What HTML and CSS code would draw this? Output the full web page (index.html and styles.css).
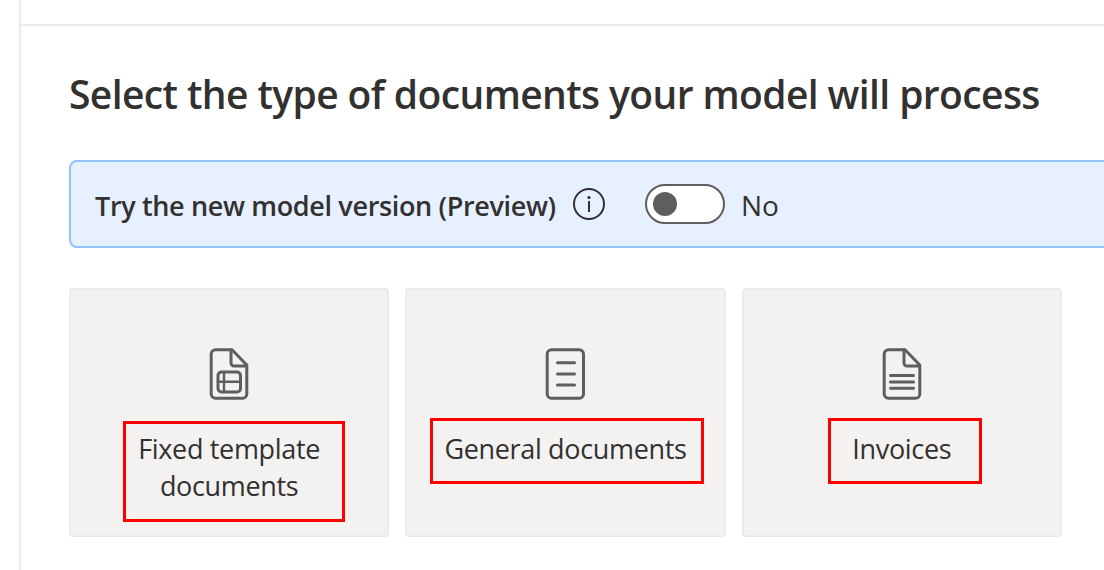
FILE: index.html
```html
<!DOCTYPE html>
<html lang="en">
<head>
<meta charset="utf-8">
<title>Select document type</title>
<link rel="stylesheet" href="styles.css">
</head>
<body>
<div class="page">
  <main class="panel">
    <div class="topbar"></div>
    <div class="content">
      <h1 class="title">Select the type of documents your model will process</h1>
      <section class="banner">
        <span class="banner-label">Try the new model version (Preview)</span>
        <svg class="info" width="32" height="32" viewBox="0 0 32 32" fill="none" stroke="#323130" stroke-width="2">
          <circle cx="16" cy="16" r="15"/>
          <path d="M16 13v11"/>
          <circle cx="16" cy="9.5" r="1.6" fill="#323130" stroke="none"/>
        </svg>
        <span class="toggle" role="switch" aria-checked="false"><span class="knob"></span></span>
        <span class="toggle-label">No</span>
      </section>
      <section class="cards">
        <article class="card">
          <svg class="icon" width="40" height="52" viewBox="-0.5 0 40 52">
            <path d="M22.500 1.700H6A4.300 4.300 0 0 0 1.700 6v40A4.300 4.300 0 0 0 6 50.200h27a4.300 4.300 0 0 0 4.300-4.300V17z"/>
            <path d="M21.500 2v13a3 3 0 0 0 3 3H37"/>
            <rect x="8.500" y="24" width="22.500" height="20" rx="3.500"/>
            <path class="thin" d="M14.500 24v20M8.500 33.800H31"/>
          </svg>
          <span class="label">Fixed template<br>documents</span>
          <span class="mark mark-fixed"></span>
        </article>
        <article class="card">
          <svg class="icon" width="40" height="52" viewBox="-0.5 0 40 52">
            <rect x="1.700" y="1.700" width="36.300" height="48.500" rx="4.300"/>
            <path d="M12 14.700h17M12 25.900h17M12 37h17"/>
          </svg>
          <span class="label">General documents</span>
          <span class="mark mark-general"></span>
        </article>
        <article class="card">
          <svg class="icon" width="40" height="52" viewBox="-0.5 0 40 52">
            <path d="M22.500 1.700H6A4.300 4.300 0 0 0 1.700 6v40A4.300 4.300 0 0 0 6 50.200h27a4.300 4.300 0 0 0 4.300-4.300V17z"/>
            <path d="M21.500 2v13a3 3 0 0 0 3 3H37"/>
            <path d="M8 27.600h23M8 34h23M8 40.300h23"/>
          </svg>
          <span class="label">Invoices</span>
          <span class="mark mark-invoices"></span>
        </article>
      </section>
    </div>
  </main>
</div>
</body>
</html>
```
FILE: styles.css
```css
* { box-sizing: border-box; }
body {
  margin: 0;
  background: #fff;
  color: #323130;
  font-family: "Open Sans", "Noto Sans", sans-serif;
  overflow: hidden;
}
.page { height: 570px; padding-left: 19px; overflow: hidden; }
.panel { height: 100%; border-left: 2px solid #ebebeb; }
.topbar { height: 26px; border-bottom: 2px solid #ebebeb; }
.content { padding: 42px 0 0 48px; }
.title {
  margin: 0;
  font-size: 39px;
  line-height: 52px;
  font-weight: 600;
  letter-spacing: -0.6px;
  white-space: nowrap;
}
.banner {
  display: flex;
  align-items: center;
  height: 88px;
  margin: 40px -10px 0 0;
  padding-left: 24px;
  background: #e6f0ff;
  border: 2px solid #94c0fc;
  border-radius: 8px;
  white-space: nowrap;
}
.banner-label {
  width: 462px;
  padding-top: 4px;
  font-size: 27px;
  line-height: 36px;
  font-weight: 600;
  letter-spacing: -0.35px;
}
.info { flex: none; margin-left: 16px; }
.toggle {
  flex: none;
  display: flex;
  align-items: center;
  width: 80px;
  height: 40px;
  margin-left: 40px;
  padding-left: 6px;
  background: #fff;
  border: 2px solid #605e5c;
  border-radius: 20px;
}
.knob { width: 24px; height: 24px; border-radius: 50%; background: #605e5c; }
.toggle-label { margin-left: 16px; padding-top: 1px; font-size: 28px; line-height: 36px; }
.cards {
  display: grid;
  grid-template-columns: repeat(3, 1fr);
  column-gap: 16px;
  width: 993px;
  margin-top: 40px;
}
.card {
  position: relative;
  display: flex;
  flex-direction: column;
  align-items: center;
  height: 249px;
  padding-top: 58px;
  background: #f3f2f1;
  border: 2px solid #ebebea;
  border-radius: 4px;
}
.icon {
  fill: none;
  stroke: #605e5c;
  stroke-width: 3;
  stroke-linecap: round;
  stroke-linejoin: round;
}
.thin { stroke-width: 2.4; }
.label {
  margin-top: 30px;
  font-size: 27px;
  line-height: 37px;
  letter-spacing: -0.33px;
  text-align: center;
  white-space: nowrap;
}
.mark { position: absolute; border: 3px solid #f00; }
.mark-fixed { left: 52px; top: 131px; width: 222px; height: 101px; }
.mark-general { left: 23px; top: 128px; width: 274px; height: 66px; }
.mark-invoices { left: 84px; top: 128px; width: 154px; height: 66px; }
```
